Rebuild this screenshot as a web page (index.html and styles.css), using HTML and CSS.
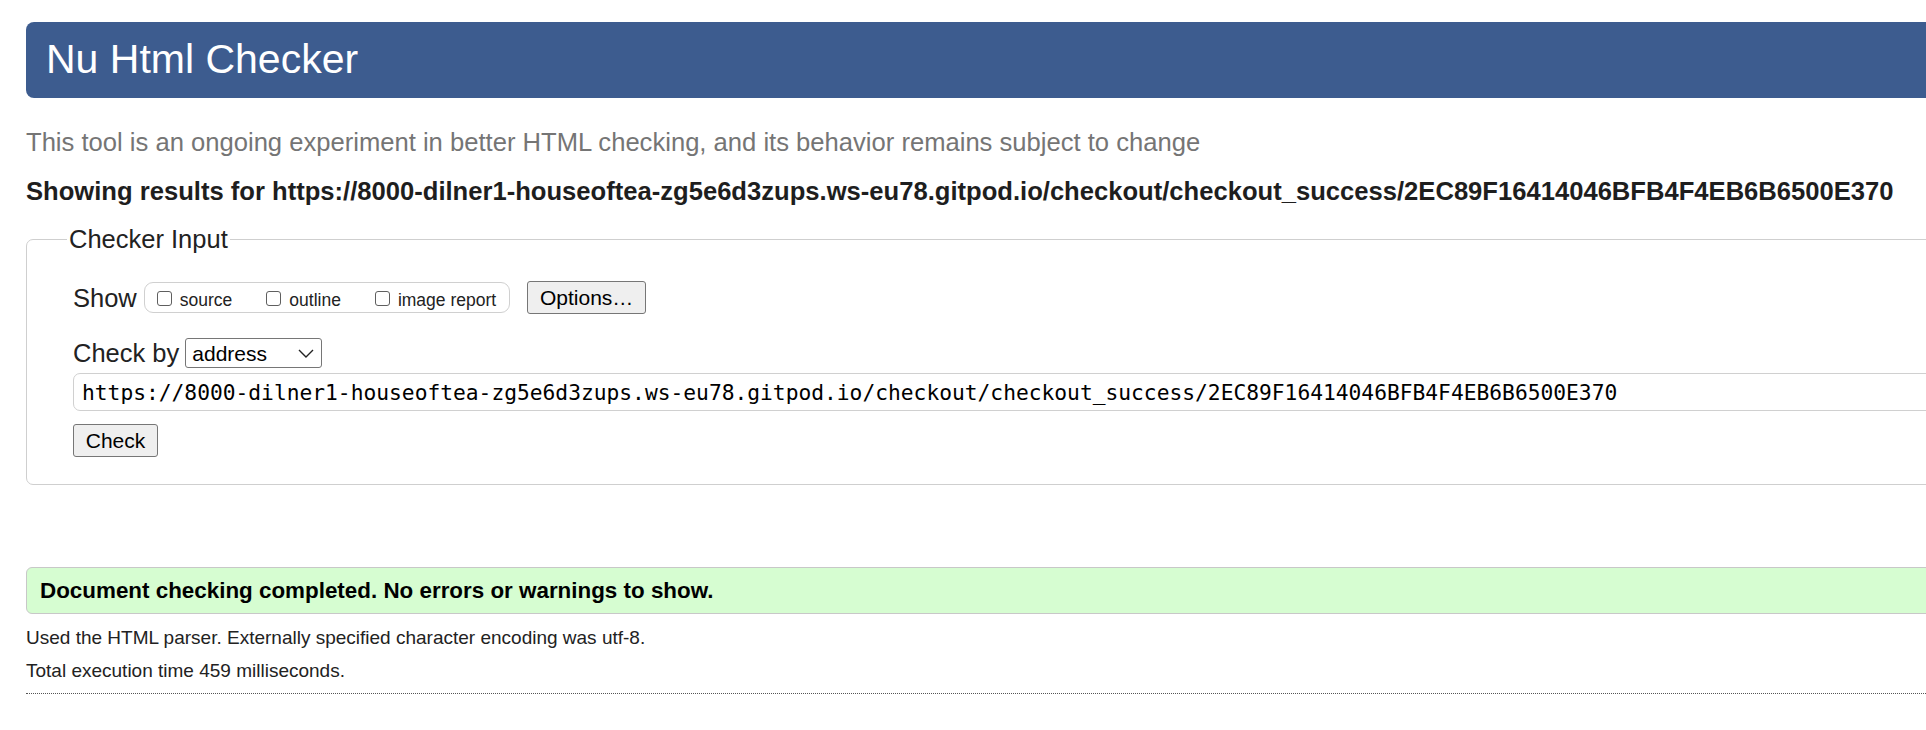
FILE: index.html
```html
<!DOCTYPE html>
<html lang="en">
<head>
<meta charset="utf-8">
<title>Nu Html Checker</title>
<link rel="stylesheet" href="styles.css">
</head>
<body>
<div class="page">
  <header class="masthead"><h1 class="title">Nu Html Checker</h1></header>
  <p class="tagline">This tool is an ongoing experiment in better HTML checking, and its behavior remains subject to change</p>
  <p class="showing">Showing results for https://8000-dilner1-houseoftea-zg5e6d3zups.ws-eu78.gitpod.io/checkout/checkout_success/2EC89F16414046BFB4F4EB6B6500E370</p>
  <form class="form">
    <fieldset class="inputbox">
      <legend class="legend">Checker Input</legend>
      <div class="row show-row">
        <span class="label">Show</span>
        <span class="group">
          <label class="opt"><input type="checkbox" class="cb"><span>source</span></label>
          <label class="opt"><input type="checkbox" class="cb"><span>outline</span></label>
          <label class="opt"><input type="checkbox" class="cb"><span>image report</span></label>
        </span>
        <button type="button" class="btn options">Options…</button>
      </div>
      <div class="row by-row">
        <span class="label">Check by</span>
        <span class="select-wrap">
          <select class="select"><option>address</option></select>
          <svg class="chev" width="16" height="9" viewBox="0 0 16 9"><path d="M1 1 L8 8 L15 1" fill="none" stroke="#222" stroke-width="1.4"/></svg>
        </span>
      </div>
      <input class="url" type="text" value="https://8000-dilner1-houseoftea-zg5e6d3zups.ws-eu78.gitpod.io/checkout/checkout_success/2EC89F16414046BFB4F4EB6B6500E370">
      <button type="button" class="btn check">Check</button>
    </fieldset>
  </form>
  <p class="success">Document checking completed. No errors or warnings to show.</p>
  <p class="details">Used the HTML parser. Externally specified character encoding was utf-8.</p>
  <p class="details">Total execution time 459 milliseconds.</p>
  <hr class="rule">
</div>
</body>
</html>
```
FILE: styles.css
```css
html, body {
  margin: 0;
  padding: 0;
  overflow: hidden;
  background: #fff;
}
body {
  font-family: "Liberation Sans", Arial, sans-serif;
  color: #222;
}
.page {
  width: 2200px;
  padding-left: 26px;
  padding-top: 22px;
}
.masthead {
  height: 76px;
  background: #3d5c8f;
  border-radius: 8px;
}
.title {
  margin: 0;
  padding-left: 20px;
  font-size: 41px;
  font-weight: normal;
  line-height: 74px;
  color: #fff;
}
.tagline {
  margin: 29px 0 0;
  font-size: 25.6px;
  line-height: 30px;
  color: #757575;
}
.showing {
  margin: 19px 0 0;
  font-size: 25.6px;
  line-height: 30px;
  font-weight: bold;
  color: #1e1e1e;
}
.form {
  margin: 18px 0 0;
}
.inputbox {
  margin: 0;
  padding: 0 0 27px 46px;
  border: 1px solid #cfcfcf;
  border-radius: 7px;
  min-width: 0;
}
.legend {
  margin-left: -6px;
  padding: 0 2px;
  font-size: 25.5px;
  line-height: 30px;
}
.row {
  display: flex;
  align-items: center;
}
.label {
  font-size: 25.5px;
  line-height: 30px;
}
.show-row {
  margin-top: 27px;
}
.group {
  display: flex;
  align-items: center;
  height: 29px;
  margin-left: 7px;
  padding: 0 13px 0 12px;
  border: 1px solid #d0d0d0;
  border-radius: 9px;
}
.opt {
  display: flex;
  align-items: center;
  gap: 8px;
  font-size: 17.5px;
}
.opt + .opt {
  margin-left: 34px;
}
.opt span {
  position: relative;
  top: 3px;
}
.cb {
  appearance: none;
  -webkit-appearance: none;
  margin: 0;
  width: 15px;
  height: 15px;
  border: 1px solid #5f5f5f;
  border-radius: 3px;
  background: #fff;
  position: relative;
  top: 1px;
}
.btn {
  font-family: "Liberation Sans", Arial, sans-serif;
  font-size: 21px;
  color: #000;
  background: #efefef;
  border: 1px solid #767676;
  border-radius: 3px;
  padding: 0;
  height: 33px;
}
.options {
  width: 119px;
  margin-left: 17px;
}
.by-row {
  margin-top: 24px;
}
.select-wrap {
  position: relative;
  margin-left: 6px;
  display: inline-flex;
}
.select {
  appearance: none;
  -webkit-appearance: none;
  width: 137px;
  height: 30px;
  margin: 0;
  padding: 0 0 0 6px;
  font-family: "Liberation Sans", Arial, sans-serif;
  font-size: 21px;
  color: #000;
  background: #fff;
  border: 1px solid #767676;
  border-radius: 3px;
}
.chev {
  position: absolute;
  left: 113px;
  top: 11px;
  pointer-events: none;
}
.url {
  display: block;
  box-sizing: border-box;
  width: 2000px;
  height: 38px;
  margin: 5px 0 0;
  padding: 0 0 0 8px;
  font-family: "DejaVu Sans Mono", "Liberation Mono", monospace;
  font-size: 21.25px;
  color: #000;
  border: 1px solid #d0d0d0;
  border-radius: 7px;
  background: #fff;
}
.check {
  display: block;
  width: 85px;
  margin-top: 13px;
}
.success {
  margin: 82px 0 0;
  height: 45px;
  box-sizing: content-box;
  padding: 0 0 0 13px;
  border: 1px solid #c8c8c8;
  border-radius: 6px;
  background: #d6fdd1;
  font-size: 22.4px;
  font-weight: bold;
  line-height: 45px;
  color: #000;
}
.details {
  margin: 0;
  font-size: 19px;
  line-height: 32.6px;
  color: #222;
}
.success + .details {
  margin-top: 8px;
}
.rule {
  margin: 6px 0 0;
  border: 0;
  border-top: 1px dotted #555;
  height: 0;
}
```
